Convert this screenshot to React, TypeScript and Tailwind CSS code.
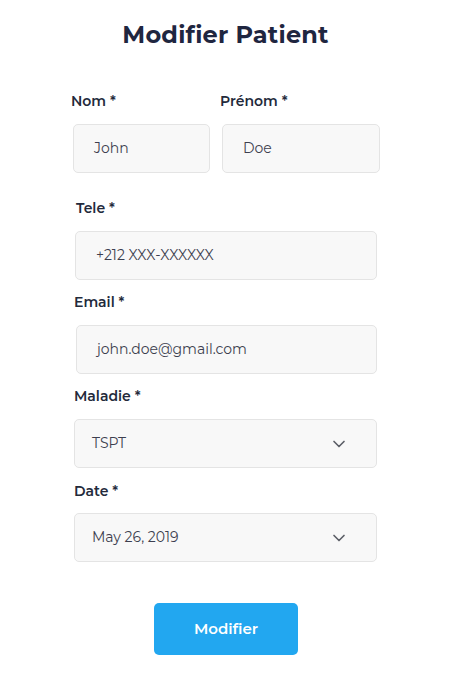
import React from "react";
import { ChevronDown } from "lucide-react";

const font = { fontFamily: "Montserrat, Inter, 'Noto Sans', sans-serif" };

const Label = ({ children, className = "" }: { children: React.ReactNode; className?: string }) => (
  <label className={"block text-[14px] leading-4 font-semibold text-[#232a3b] " + className}>{children}</label>
);

const Field = ({ value, className = "" }: { value: string; className?: string }) => (
  <div
    className={
      "h-[49px] flex items-center pl-5 rounded-[5px] border border-[#e4e4e4] bg-[#f8f8f8] text-[14px] text-[#3d3f4f] " +
      className
    }
  >
    {value}
  </div>
);

const Select = ({ value, className = "" }: { value: string; className?: string }) => (
  <div
    className={
      "h-[49px] flex items-center justify-between pl-[17px] pr-[27px] rounded-[5px] border border-[#e4e4e4] bg-[#f8f8f8] text-[14px] text-[#3d3f4f] " +
      className
    }
  >
    <span>{value}</span>
    <ChevronDown size={20} strokeWidth={2} className="text-[#5b5e66]" />
  </div>
);

export default function App() {
  return (
    <div className="w-[451px] h-[673px] bg-white" style={font}>
      <h1 className="pt-[19px] text-center text-[24px] leading-8 font-bold text-[#1f2640] tracking-[0.2px]">
        Modifier Patient
      </h1>

      <div className="ml-[71px] w-[310px] mt-[42px]">
        <div className="flex gap-[13px]">
          <div className="w-[139px]">
            <Label>Nom *</Label>
            <Field value="John" className="mt-[15px] ml-[2px] w-[137px]" />
          </div>
          <div className="flex-1">
            <Label className="-ml-[3px]">Prénom *</Label>
            <Field value="Doe" className="mt-[15px] -ml-[1px] w-[158px]" />
          </div>
        </div>

        <Label className="mt-[27px] ml-[5px]">Tele *</Label>
        <Field value="+212 XXX-XXXXXX" className="mt-[15px] ml-[4px] w-[302px]" />

        <Label className="mt-[14px] ml-[3px]">Email *</Label>
        <Field value="john.doe@gmail.com" className="mt-[15px] ml-[5px] w-[301px]" />

        <Label className="mt-[14px] ml-[3px]">Maladie *</Label>
        <Select value="TSPT" className="mt-[15px] ml-[3px] w-[303px]" />

        <Label className="mt-[15px] ml-[3px]">Date *</Label>
        <Select value="May 26, 2019" className="mt-[14px] ml-[3px] w-[303px]" />
      </div>

      <div className="flex justify-center mt-[41px]">
        <button className="ml-[1px] w-[144px] h-[52px] rounded-[5px] bg-[#22a7f0] text-white text-[15px] font-semibold">
          Modifier
        </button>
      </div>
    </div>
  );
}
